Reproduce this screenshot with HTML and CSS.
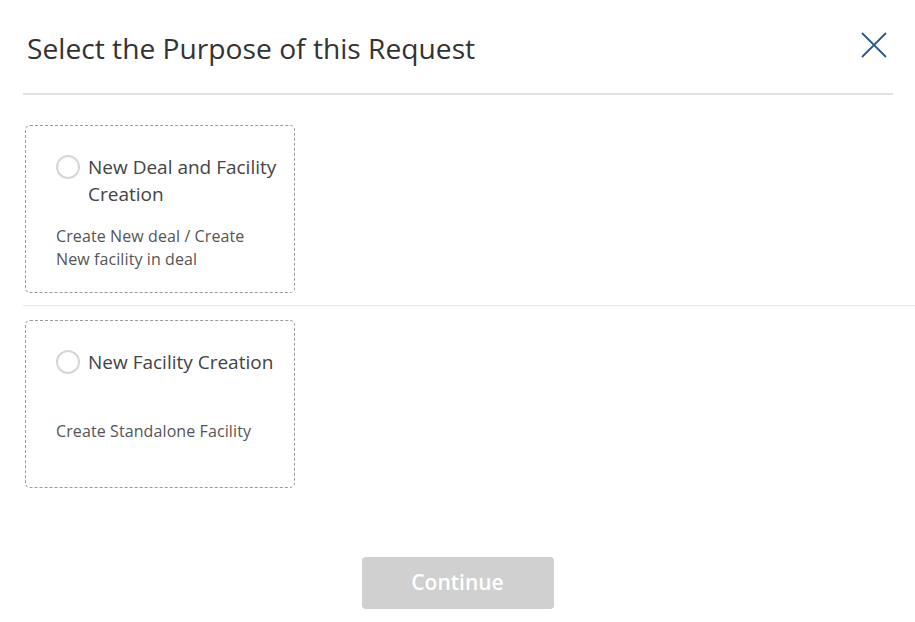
FILE: index.html
```html
<!DOCTYPE html>
<html>
<head>
<meta charset="utf-8">
<link rel="stylesheet" href="styles.css">
</head>
<body>
<div class="modal">
  <header class="modal-header">
    <h1 class="modal-title">Select the Purpose of this Request</h1>
    <button class="close-btn" aria-label="Close">
      <svg width="28" height="28" viewBox="0 0 28 28"><path d="M2 2 L26 26 M26 2 L2 26" stroke="#2a5a88" stroke-width="1.8" fill="none"/></svg>
    </button>
  </header>
  <div class="options">
    <div class="option-row">
      <label class="card">
        <span class="card-head">
          <span class="radio"></span>
          <span class="card-label">New Deal and Facility Creation</span>
        </span>
        <span class="card-desc">Create New deal / Create New facility in deal</span>
      </label>
    </div>
    <div class="option-row last">
      <label class="card">
        <span class="card-head">
          <span class="radio"></span>
          <span class="card-label">New Facility Creation</span>
        </span>
        <span class="card-desc">Create Standalone Facility</span>
      </label>
    </div>
  </div>
  <div class="footer">
    <button class="continue-btn" disabled>Continue</button>
  </div>
</div>
</body>
</html>
```
FILE: styles.css
```css
html, body {
  margin: 0;
  padding: 0;
  background: #fff;
}
body {
  font-family: "Open Sans", "Noto Sans", sans-serif;
  width: 915px;
  height: 622px;
  overflow: hidden;
}
.modal {
  padding: 0 22px 0 23px;
}
.modal-header {
  height: 93px;
  display: flex;
  align-items: center;
  justify-content: space-between;
  border-bottom: 2px solid #e1e4e4;
}
.modal-title {
  margin: 0 0 0 4px;
  font-size: 28.2px;
  font-weight: 400;
  color: #333;
  letter-spacing: 0;
  padding-top: 2px;
}
.close-btn {
  border: 0;
  background: none;
  padding: 0;
  width: 28px;
  height: 28px;
  margin-right: 5px;
  margin-bottom: 3px;
  display: flex;
}
.options {
  padding-top: 30px;
}
.option-row {
  padding-left: 2px;
  padding-bottom: 12px;
  border-bottom: 1px solid #e6e6e6;
  margin-right: -22px;
  margin-bottom: 14px;
}
.option-row.last {
  border-bottom: 0;
  padding-bottom: 0;
  margin-bottom: 0;
}
.card {
  box-sizing: border-box;
  width: 270px;
  height: 168px;
  border: 1px dashed #9a9a9a;
  border-radius: 5px;
  padding: 28px 12px 0 30px;
  display: flex;
  flex-direction: column;
}
.card-head {
  display: flex;
  align-items: flex-start;
  min-height: 54px;
}
.radio {
  box-sizing: border-box;
  flex: none;
  width: 24px;
  height: 24px;
  border: 2px solid #d6d6d6;
  border-radius: 50%;
  margin-top: 1px;
  margin-right: 8px;
}
.card-label {
  font-size: 19px;
  line-height: 27px;
  color: #444;
  letter-spacing: 0;
}
.card-desc {
  margin-top: 17px;
  max-width: 200px;
  font-size: 16px;
  line-height: 23px;
  color: #555;
  letter-spacing: 0.1px;
}
.footer {
  display: flex;
  justify-content: center;
  padding-top: 69px;
  margin-left: -23px;
  margin-right: -22px;
}
.continue-btn {
  width: 192px;
  height: 52px;
  border: 0;
  border-radius: 4px;
  background: #d0d0d0;
  color: #fff;
  font-family: "Open Sans", "Noto Sans", sans-serif;
  font-size: 21px;
  font-weight: 600;
  padding: 0 0 2px;
}
```
